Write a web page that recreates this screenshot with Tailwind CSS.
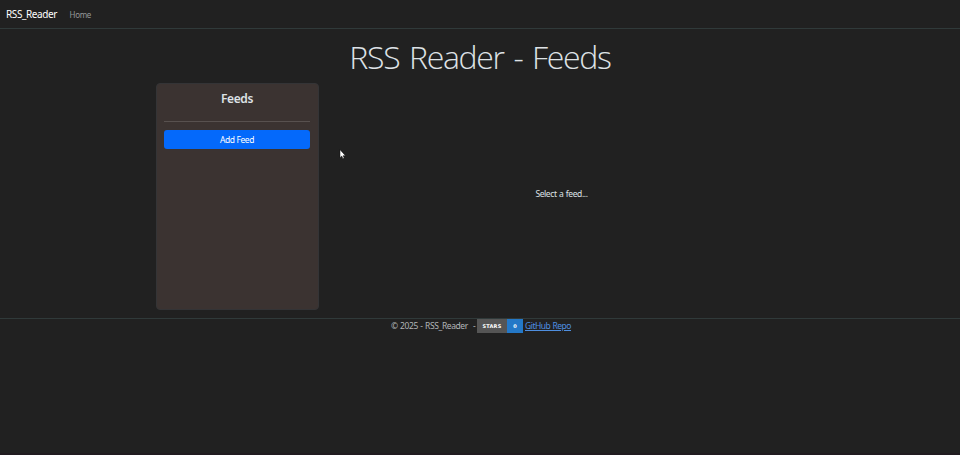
<!DOCTYPE html>
<html lang="en">
<head>
<meta charset="utf-8">
<title>RSS Reader - Feeds</title>
<script src="https://cdn.jsdelivr.net/npm/@tailwindcss/browser@4"></script>
</head>
<body class="flex h-[455px] w-[960px] flex-col overflow-hidden border-b-2 border-[#211b20] bg-[#212121] font-['Noto_Sans','Open_Sans',sans-serif] text-[8.5px] tracking-[-0.4px] [word-spacing:0.6px] text-[#dee2e6]">
  <nav class="flex h-[29px] shrink-0 items-center border-b border-[#303a3a] pl-1.5">
    <a class="w-[63.5px] pt-px text-[10px] tracking-[-0.4px] whitespace-nowrap text-white">RSS_Reader</a>
    <a class="pt-px text-[8px] tracking-[-0.3px] text-[#95989a]">Home</a>
  </nav>
  <h1 class="mt-1 flex h-[50px] shrink-0 items-center justify-center pb-[3px] font-['Open_Sans',sans-serif] text-[32px] font-light tracking-[-1.3px] [word-spacing:2.6px] whitespace-nowrap"><span>RSS Reader - Feeds</span></h1>
  <main class="ml-[156px] flex h-[227px] shrink-0">
    <aside class="w-[163px] rounded-[4px] border border-[#343436] bg-[#3b3331] pr-2 pl-[7px]">
      <h2 class="flex h-[30px] items-center justify-center text-[12px] font-semibold tracking-[-0.4px]"><span>Feeds</span></h2>
      <hr class="mt-[7px] border-[#58514f]">
      <button class="mt-2 flex h-[19px] w-full items-center justify-center rounded-[3px] bg-[#0469fb] pt-px text-[8.5px] text-white"><span>Add Feed</span></button>
    </aside>
    <section class="flex w-[485px] items-center justify-center pb-[5px]"><span>Select a feed...</span></section>
  </main>
  <footer class="mt-2 flex h-[15px] shrink-0 items-start border-t border-[#303a3a] pl-[391px] leading-[13px] text-[#b2b5b8]">
    <span class="flex w-[86px] gap-[5px] whitespace-nowrap"><span>© 2025 - RSS_Reader</span><span>-</span></span>
    <span class="flex h-[14px] w-[46px] text-center font-['DejaVu_Sans',sans-serif] text-[5px] leading-[14px] font-bold tracking-normal text-white">
      <span class="w-[30px] bg-[#555555] tracking-[0.2px]">STARS</span><span class="w-4 bg-[#2478c7]">0</span>
    </span>
    <a class="ml-0.5 whitespace-nowrap text-[#4f8fe0] tracking-[-0.5px] underline"><span>GitHub Repo</span></a>
  </footer>
  <svg class="absolute top-[149px] left-[339px]" width="8" height="11" viewBox="0 0 8 11"><path d="M1 .7v8l1.8-1.6 1.1 2.6 1.3-.6-1.1-2.4h2.4z" fill="#fff" stroke="#111" stroke-width=".5"/></svg>
</body>
</html>
